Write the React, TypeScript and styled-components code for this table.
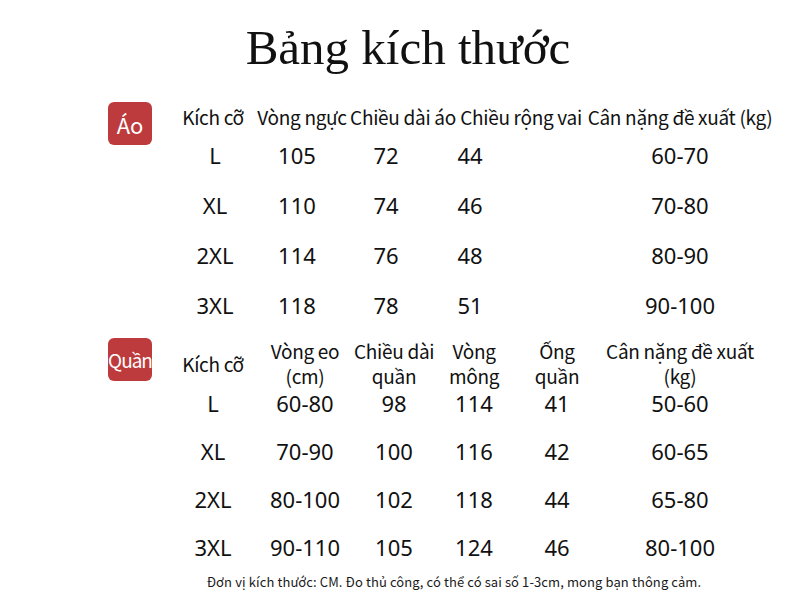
import React from "react";
import styled, { createGlobalStyle } from "styled-components";

const GlobalStyle = createGlobalStyle`
	html, body {
		margin: 0;
		padding: 0;
		background: #ffffff;
	}
	body {
		font-family: "Noto Sans CJK SC", "Noto Sans", sans-serif;
		color: #111;
	}
`;

const Page = styled.div`
	width: 790px;
	height: 608px;
	display: flex;
	flex-direction: column;
	overflow: hidden;
	background: #ffffff;
`;

const Title = styled.h1`
	margin: 22px 0 0;
	padding-left: 26px;
	text-align: center;
	font-family: "Liberation Serif", "Times New Roman", serif;
	font-weight: 400;
	font-size: 49px;
	line-height: 52px;
	color: #111;
`;

const Section = styled.div<{ $top: number }>`
	display: flex;
	align-items: flex-start;
	margin-top: ${(p) => p.$top}px;
	padding-left: 108px;
`;

const Badge = styled.div<{ $small?: boolean }>`
	flex: none;
	width: 44px;
	height: 43px;
	border-radius: 6px;
	background: #bd3b3c;
	color: #fff;
	display: flex;
	align-items: center;
	justify-content: center;
	font-family: "Noto Sans CJK SC", "Noto Sans", sans-serif;
	font-size: ${(p) => (p.$small ? 19 : 22)}px;
	letter-spacing: ${(p) => (p.$small ? -1 : 0)}px;
`;

const Table = styled.div`
	margin-left: 18px;
	display: flex;
	flex-direction: column;
`;

const Grid = styled.div<{ $cols: string; $height: number; $align?: string }>`
	display: grid;
	grid-template-columns: ${(p) => p.$cols};
	height: ${(p) => p.$height}px;
	align-items: ${(p) => p.$align ?? "center"};
`;

const Head = styled.div<{ $single?: boolean }>`
	text-align: center;
	font-size: 19px;
	line-height: 25px;
	white-space: nowrap;
	letter-spacing: -0.3px;
	align-self: ${(p) => (p.$single ? "center" : "auto")};
`;

const Value = styled.div`
	text-align: center;
	font-family: "Noto Sans", "Open Sans", sans-serif;
	font-size: 22px;
	line-height: 28px;
	white-space: nowrap;
`;

const Note = styled.p`
	margin: 2px 0 0;
	text-align: center;
	padding-left: 118px;
	font-size: 13px;
	letter-spacing: 0.1px;
	line-height: 18px;
	color: #1a1a1a;
`;

const shirtHeadCols = "86px 92px 110px 126px 192px";
const shirtValueCols = "90px 74px 104px 64px 82px 192px";
const pantsCols = "86px 98px 80px 80px 86px 160px";

const shirtHeads = ["Kích cỡ", "Vòng ngực", "Chiều dài áo", "Chiều rộng vai", "Cân nặng đề xuất (kg)"];
const shirtRows = [
	["L", "105", "72", "44", "60-70"],
	["XL", "110", "74", "46", "70-80"],
	["2XL", "114", "76", "48", "80-90"],
	["3XL", "118", "78", "51", "90-100"],
];

const pantsHeads = [
	["Kích cỡ"],
	["Vòng eo", "(cm)"],
	["Chiều dài", "quần"],
	["Vòng", "mông"],
	["Ống", "quần"],
	["Cân nặng đề xuất", "(kg)"],
];
const pantsRows = [
	["L", "60-80", "98", "114", "41", "50-60"],
	["XL", "70-90", "100", "116", "42", "60-65"],
	["2XL", "80-100", "102", "118", "44", "65-80"],
	["3XL", "90-110", "105", "124", "46", "80-100"],
];

export default function App() {
	return (
		<Page>
			<GlobalStyle />
			<Title>Bảng kích thước</Title>

			<Section $top={28}>
				<Badge>Áo</Badge>
				<Table>
					<Grid $cols={shirtHeadCols} $height={28}>
						{shirtHeads.map((h) => (
							<Head key={h}>{h}</Head>
						))}
					</Grid>
					{shirtRows.map((row) => (
						<Grid key={row[0]} $cols={shirtValueCols} $height={50}>
							{row.slice(0, 4).map((v, i) => (
								<Value key={i}>{v}</Value>
							))}
							<span />
							<Value>{row[4]}</Value>
						</Grid>
					))}
				</Table>
			</Section>

			<Section $top={8}>
				<Badge $small>Quần</Badge>
				<Table>
					<Grid $cols={pantsCols} $height={41} $align="start">
						{pantsHeads.map((lines, i) => (
							<Head key={i} $single={lines.length === 1}>
								{lines.map((l) => (
									<div key={l}>{l}</div>
								))}
							</Head>
						))}
					</Grid>
					{pantsRows.map((row) => (
						<Grid key={row[0]} $cols={pantsCols} $height={48}>
							{row.map((v, i) => (
								<Value key={i}>{v}</Value>
							))}
						</Grid>
					))}
				</Table>
			</Section>

			<Note>Đơn vị kích thước: CM. Đo thủ công, có thể có sai số 1-3cm, mong bạn thông cảm.</Note>
		</Page>
	);
}
